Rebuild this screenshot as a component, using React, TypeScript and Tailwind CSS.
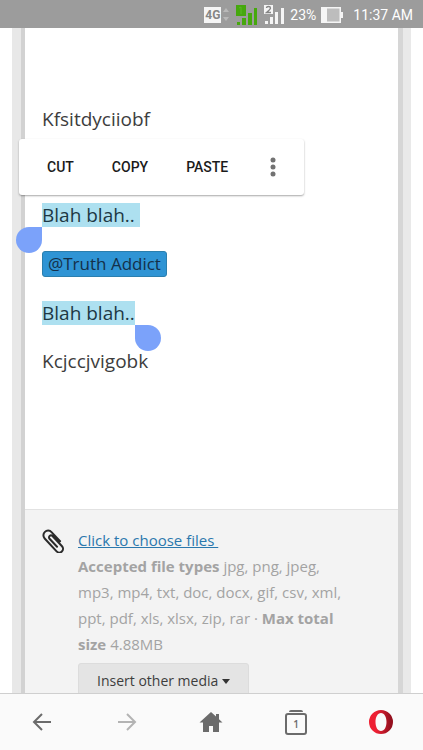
import { ReactNode } from 'react';

const ACCEPTED_TYPES =
  'jpg, png, jpeg, mp3, mp4, txt, doc, docx, gif, csv, xml, ppt, pdf, xls, xlsx, zip, rar';

export default function App() {
  return (
    <div className="flex h-screen flex-col overflow-hidden bg-white font-['Open_Sans',sans-serif]">
      <StatusBar />
      <main className="flex min-h-0 flex-1 overflow-hidden px-3">
        <div className="w-[9px] shrink-0 bg-[#e8e8e8]" />
        <div className="w-1 shrink-0 bg-[#d2d2d2]" />
        <div className="min-w-0 flex-1">
          <Editor />
          <Attachments />
        </div>
        <div className="w-[5px] shrink-0 bg-[#d6d6d6]" />
        <div className="w-2 shrink-0 bg-[#e9e9e9]" />
      </main>
      <BrowserBar />
    </div>
  );
}

function StatusBar() {
  return (
    <header className="flex h-7 shrink-0 items-center justify-end bg-[#9c9c9c] pt-[2px] pr-[10px] font-[Roboto,sans-serif] text-[14px] leading-5 text-white">
      <span className="flex h-4 w-[17px] items-center justify-center bg-[#f5f5f5] text-[12px] font-bold text-[#858585]">
        4G
      </span>
      <svg className="ml-px h-[18px] w-2" viewBox="0 0 8 18" fill="#b9b9b9">
        <path d="M1 6l3-4 3 4zM1 11h6l-3 4z" />
      </svg>
      <svg className="ml-[5px] h-[22px] w-[23px]" viewBox="0 0 23 22" fill="#46a80d">
        <path d="M1 1h10v11H1zM2 18h3v3H2zM7 14h4v7H7zM13 9h4v12h-4zM19 4h3v17h-3z" />
        <path d="M4 4l2-1v7" fill="none" stroke="#5bb72a" />
      </svg>
      <svg className="ml-[5px] h-[22px] w-[22px]" viewBox="0 0 22 22" fill="#f5f5f5">
        <path d="M1 1h9v9H1zM2 17h3v3H2zM7 13h3v7H7zM12 8h3v12h-3zM18 4h3v16h-3z" />
        <path
          d="M3.500 4q0-1.500 2-1.500t2 1.500q0 1.200-4 4.500h4.500"
          fill="none"
          stroke="#858585"
          strokeWidth="1.300"
        />
      </svg>
      <span className="ml-[5px]">23%</span>
      <svg className="ml-[5px] h-4 w-[22px]" viewBox="0 0 22 16">
        <path d="M0 0h20v5h2v6h-2v5H0z" fill="#f5f5f5" />
        <path d="M6 1.500h12.500v13H6z" fill="#bdbdbd" />
      </svg>
      <time className="ml-[10px]">11:37 AM</time>
    </header>
  );
}

function Editor() {
  return (
    <article className="relative flex h-[482px] flex-col gap-6 border-b border-[#e2e2e2] px-[17px] pt-[79px] text-[19px] leading-6 text-[#3d3d3d]">
      <p>Kfsitdyciiobf</p>
      <p className="h-6" />
      <p>
        <Selected handle="start">Blah blah..&nbsp;</Selected>
      </p>
      <p className="flex">
        <a
          href="#truth-addict"
          className="h-[26px] rounded-[3px] border border-[#2b7fae] bg-[#2f94d4] px-[5px] text-[17px] leading-6 text-[#14304a]"
        >
          @Truth Addict
        </a>
      </p>
      <p>
        <Selected handle="end">Blah blah..</Selected>
      </p>
      <p>Kcjccjvigobk</p>
      <EditMenu />
    </article>
  );
}

interface SelectedProps {
  handle: 'start' | 'end';
  children: ReactNode;
}

function Selected({ handle, children }: SelectedProps) {
  return (
    <span className="relative inline-block bg-[#ade0f0] text-[#1d3844]">
      {children}
      {handle === 'start' ? (
        <span className="absolute top-full right-full size-[26px] rounded-full rounded-tr-none bg-[#7ba2fa]" />
      ) : (
        <span className="absolute top-full left-full size-[26px] rounded-full rounded-tl-none bg-[#7ba2fa]" />
      )}
    </span>
  );
}

function EditMenu() {
  return (
    <div
      role="toolbar"
      className="absolute top-[111px] -left-[6px] flex h-14 w-[285px] items-center rounded-[3px] bg-white pr-[19px] pl-7 font-[Roboto,sans-serif] text-[14px] leading-5 font-medium text-[#1b1b1b] shadow-[0_1px_2px_rgba(0,0,0,0.35)]"
    >
      <button type="button">CUT</button>
      <button type="button" className="ml-[38px]">
        COPY
      </button>
      <button type="button" className="ml-[38px]">
        PASTE
      </button>
      <button type="button" aria-label="More" className="ml-auto flex w-6 justify-center">
        <svg className="h-5 w-[6px]" viewBox="0 0 6 20" fill="#727272">
          <circle cx="3" cy="3" r="2.500" />
          <circle cx="3" cy="10" r="2.500" />
          <circle cx="3" cy="17" r="2.500" />
        </svg>
      </button>
    </div>
  );
}

function Attachments() {
  return (
    <section className="flex min-h-full items-start gap-3 bg-[#f3f3f3] pt-[17px] pr-12 pl-[17px]">
      <svg
        className="mt-[2px] h-6 w-6 shrink-0"
        viewBox="0 0 24 24"
        fill="none"
        stroke="#2b2b2b"
        strokeWidth="2"
        strokeLinecap="round"
      >
        <path
          transform="translate(11 12) rotate(-43)"
          d="M5 5V-7.500a4.700 4.700 0 00-9.400 0V10a3.700 3.700 0 007.400 0V-4a2 2 0 00-4 0V7"
        />
      </svg>
      <div className="text-[15px] leading-[26px] text-[#a3a3a3]">
        <a href="#files" className="text-[#2b78ad] underline">
          Click to choose files&nbsp;
        </a>
        <p>
          <strong>Accepted file types</strong> {ACCEPTED_TYPES} · <strong>Max total size</strong>{' '}
          4.88MB
        </p>
        <button
          type="button"
          className="mt-[6px] flex h-9 items-center gap-1 rounded-[3px] border border-[#dcdcdc] bg-[#e4e4e4] px-[18px] text-[14px] text-[#3d3d3d]"
        >
          Insert other media
          <svg className="h-[5px] w-2" viewBox="0 0 8 5" fill="#333">
            <path d="M0 0h8L4 5z" />
          </svg>
        </button>
      </div>
    </section>
  );
}

function BrowserBar() {
  return (
    <nav className="grid h-[57px] shrink-0 grid-cols-5 items-center justify-items-center border-t border-[#cfcfcf] bg-[#fafafa] text-[#6b6b6b]">
      <button type="button" aria-label="Back">
        <svg className="size-5" viewBox="0 0 20 20" fill="none" stroke="currentColor" strokeWidth="2">
          <path d="M19 10H2M10 2l-8 8 8 8" />
        </svg>
      </button>
      <button type="button" aria-label="Forward" className="text-[#b3b3b3]">
        <svg className="size-5" viewBox="0 0 20 20" fill="none" stroke="currentColor" strokeWidth="2">
          <path d="M1 10h17M10 2l8 8-8 8" />
        </svg>
      </button>
      <button type="button" aria-label="Home">
        <svg className="h-5 w-6" viewBox="0 0 24 20" fill="currentColor">
          <path d="M12 0L.5 10.500H4V20h6v-6h4v6h6v-9.500h3.500L20 7.300V2h-3v2.600z" />
        </svg>
      </button>
      <button type="button" aria-label="Tabs" className="flex flex-col items-center">
        <span className="h-[2px] w-[14px] rounded-t-sm bg-[#6b6b6b]" />
        <span className="mt-px flex h-[22px] w-[22px] items-center justify-center rounded-[3px] border-2 border-[#6b6b6b] text-[10px] leading-4 font-semibold">
          1
        </span>
      </button>
      <button type="button" aria-label="Opera menu">
        <svg className="size-6" viewBox="0 0 24 24">
          <defs>
            <linearGradient id="opera" x1="0" x2="1">
              <stop offset="0.300" stopColor="#ee2033" />
              <stop offset="0.900" stopColor="#95101f" />
            </linearGradient>
          </defs>
          <path
            fill="url(#opera)"
            fillRule="evenodd"
            d="M12 0a12 12 0 100 24 12 12 0 000-24zm0 3c3.400 0 5.500 4 5.500 9s-2.100 9-5.500 9-5.500-4-5.500-9 2.100-9 5.500-9z"
          />
        </svg>
      </button>
    </nav>
  );
}
